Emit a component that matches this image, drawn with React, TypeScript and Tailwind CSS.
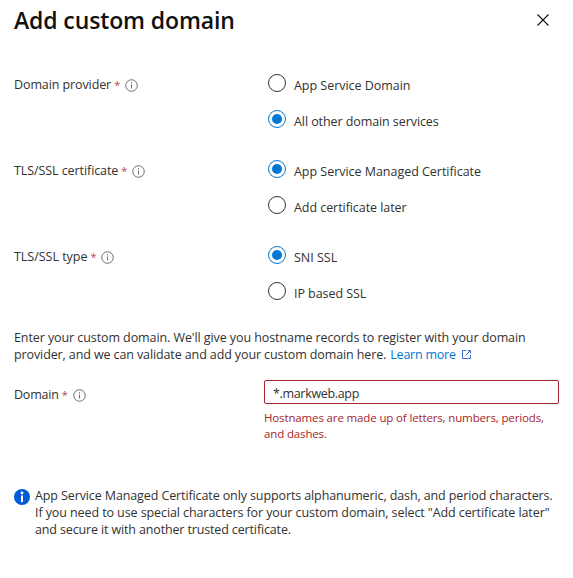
import React from "react";

function InfoIcon() {
  return (
    <svg className="mt-[2px] h-[13px] w-[13px] shrink-0" viewBox="0 0 13 13" fill="none">
      <circle cx="6.5" cy="6.5" r="5.75" stroke="#605e5c" strokeWidth="0.9" />
      <path d="M6.5 5.5V9.5M6.5 3.2V4.4" stroke="#605e5c" strokeWidth="0.9" />
    </svg>
  );
}

function Label({ text, spacing }: { text: string; spacing: string }) {
  return (
    <div className="flex h-5 w-[250px] shrink-0 items-center">
      <span className={`whitespace-nowrap ${spacing}`}>{text}</span>
      <span className="ml-[3px] w-[6px] text-[11px] text-[#b04a50]">*</span>
      <span className="ml-[5px] flex">
        <InfoIcon />
      </span>
    </div>
  );
}

function Radio({ text, checked, spacing }: { text: string; checked?: boolean; spacing: string }) {
  return (
    <div className="flex h-5 items-center">
      <span
        className={`ml-[4px] flex h-[18px] w-[18px] shrink-0 items-center justify-center rounded-full border ${
          checked ? "border-[#0078d4]" : "border-[#323130]"
        }`}
      >
        {checked && <span className="h-[10px] w-[10px] rounded-full bg-[#0078d4]" />}
      </span>
      <span className={`mt-[4px] ml-[8px] whitespace-nowrap ${spacing}`}>{text}</span>
    </div>
  );
}

export default function App() {
  return (
    <div className="h-[578px] w-[573px] overflow-hidden bg-white pl-[14px] font-['Open_Sans','Noto_Sans',sans-serif] text-[12.5px] leading-[17px] text-[#323130]">
      <header className="flex h-[40px] items-center justify-between pr-[24px]">
        <h1 className="text-[23px] leading-[32px] font-semibold whitespace-nowrap text-[#111] tracking-[-0.12px]">
          Add custom domain
        </h1>
        <svg className="h-[12px] w-[12px]" viewBox="0 0 12 12" fill="none">
          <path d="M0.5 0.5L11.5 11.5M11.5 0.5L0.5 11.5" stroke="#111" strokeWidth="1.1" />
        </svg>
      </header>

      <div className="mt-[33px] flex flex-col gap-[30px]">
        <section className="flex">
          <div className="pt-px">
            <Label text="Domain provider" spacing="tracking-[-0.1px]" />
          </div>
          <div className="flex flex-col gap-4">
            <Radio text="App Service Domain" spacing="tracking-[-0.03px]" />
            <Radio text="All other domain services" checked spacing="tracking-[-0.08px]" />
          </div>
        </section>
        <section className="flex">
          <div className="pt-px">
            <Label text="TLS/SSL certificate" spacing="tracking-[-0.08px]" />
          </div>
          <div className="flex flex-col gap-4">
            <Radio text="App Service Managed Certificate" checked spacing="tracking-[-0.03px]" />
            <Radio text="Add certificate later" spacing="tracking-[-0.06px]" />
          </div>
        </section>
        <section className="flex">
          <div className="pt-px">
            <Label text="TLS/SSL type" spacing="tracking-[-0.02px]" />
          </div>
          <div className="flex flex-col gap-4">
            <Radio text="SNI SSL" checked spacing="tracking-[0px]" />
            <Radio text="IP based SSL" spacing="tracking-[-0.06px]" />
          </div>
        </section>
      </div>

      <div className="mt-[28px] whitespace-nowrap">
        <p className="tracking-[-0.085px]">
          Enter your custom domain. We'll give you hostname records to register with your domain
        </p>
        <p className="flex items-center tracking-[-0.11px]">
          provider, and we can validate and add your custom domain here.
          <a className="ml-[4px] flex items-center tracking-[-0.23px] text-[#0078d4]">
            Learn more
            <svg className="ml-[6px] h-[9px] w-[9px]" viewBox="0 0 9 9" fill="none" stroke="#3c6fd0" strokeWidth="1">
              <path d="M4 0.5H0.5V8.5H8.5V5M5.5 0.5H8.5V3.5M8.3 0.7L3.5 5.5" />
            </svg>
          </a>
        </p>
      </div>

      <section className="mt-[17px] flex">
        <div className="mt-[4px]">
          <Label text="Domain" spacing="tracking-[-0.2px]" />
        </div>
        <div className="w-[295px]">
          <div className="flex h-[24px] items-center rounded-[2px] border border-[#a4262c] pl-[8px]">
            <span className="mt-[2px] tracking-[-0.33px]">*.markweb.app</span>
          </div>
          <div className="mt-[6px] text-[11.5px] leading-[16px] whitespace-nowrap text-[#a4262c]">
            <p className="tracking-[-0.14px]">Hostnames are made up of letters, numbers, periods,</p>
            <p className="tracking-[-0.14px]">and dashes.</p>
          </div>
        </div>
      </section>

      <section className="mt-[45px] flex">
        <svg className="mt-[2px] h-[16px] w-[16px] shrink-0" viewBox="0 0 16 16">
          <circle cx="8" cy="8" r="8" fill="#015cda" />
          <rect x="7" y="6.5" width="2" height="6.5" fill="#fff" />
          <circle cx="8" cy="4" r="1.4" fill="#fff" />
        </svg>
        <div className="ml-[5px] whitespace-nowrap">
          <p className="tracking-[-0.11px]">App Service Managed Certificate only supports alphanumeric, dash, and period characters.</p>
          <p className="tracking-[-0.09px]">If you need to use special characters for your custom domain, select "Add certificate later"</p>
          <p className="tracking-[-0.14px]">and secure it with another trusted certificate.</p>
        </div>
      </section>
    </div>
  );
}
